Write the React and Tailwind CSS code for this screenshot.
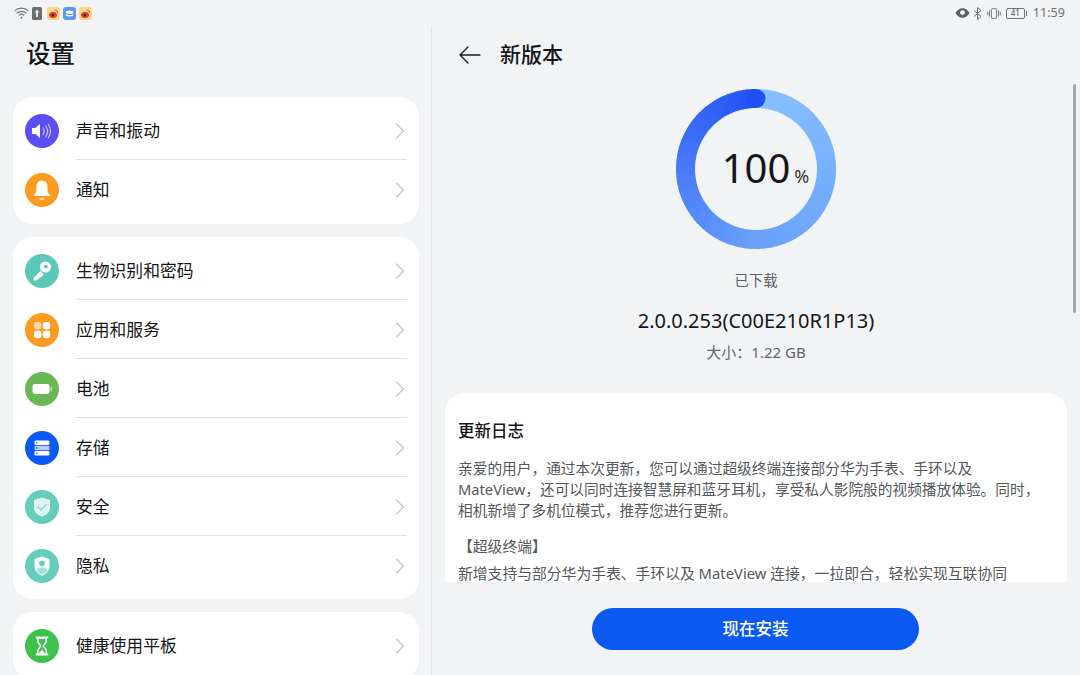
import { ChevronRight } from "lucide-react";

// small white glyphs that sit inside the round settings icons
const glyphs = {
  sound: (
    <>
      <path d="M7 14h3.4l4.6-4v14l-4.6-4H7z" fill="#fff" />
      <path d="M18 14c1.4 2 1.4 4.6 0 6.6M20.6 12c2.4 3.2 2.4 7.6 0 10.8M23.2 10.2c3 4 3 9.8 0 13.8" stroke="#fff" strokeOpacity="0.65" strokeWidth="1.2" fill="none" strokeLinecap="round" />
    </>
  ),
  bell: (
    <>
      <path d="M17 7.5c-3.6 0-5.6 2.8-5.6 6.2v4.2c0 1.3-1 2.6-2.4 3.9-.4.4-.2 1.2.5 1.2h15c.7 0 .9-.8.5-1.2-1.4-1.3-2.4-2.6-2.4-3.9v-4.2c0-3.4-2-6.2-5.6-6.2z" fill="#fff" />
      <path d="M14.4 25h5.2a2.6 2.1 0 0 1-5.2 0z" fill="#fff" fillOpacity="0.75" />
    </>
  ),
  key: (
    <>
      <path d="M15.5 17l-7 7v2.5h3l1-1.2h1.6v-1.6l1.6-.2 3-3" fill="#fff" />
      <circle cx="20.5" cy="13" r="5.6" fill="#fff" />
      <circle cx="20.8" cy="12.6" r="1.9" fill="#5cc9b8" />
    </>
  ),
  apps: (
    <>
      <rect x="9" y="9" width="7.4" height="7.4" rx="2.4" fill="#fff" fillOpacity="0.6" />
      <rect x="17.8" y="9" width="7.4" height="7.4" rx="2.4" fill="#fff" />
      <rect x="9" y="17.8" width="7.4" height="7.4" rx="2.4" fill="#fff" />
      <rect x="17.8" y="17.8" width="7.4" height="7.4" rx="2.4" fill="#fff" />
    </>
  ),
  battery: (
    <>
      <rect x="7.5" y="12" width="17" height="10" rx="2.4" fill="#fff" />
      <rect x="25.5" y="14.5" width="1.4" height="5" rx="0.7" fill="#fff" fillOpacity="0.6" />
    </>
  ),
  storage: (
    <>
      <rect x="9.5" y="9.5" width="15" height="4.4" rx="1.2" fill="#fff" />
      <rect x="9.5" y="14.8" width="15" height="4.4" rx="1.2" fill="#fff" fillOpacity="0.7" />
      <rect x="9.5" y="20.1" width="15" height="4.4" rx="1.2" fill="#fff" />
      <circle cx="11.8" cy="11.7" r="0.8" fill="#0a59f7" />
      <circle cx="11.8" cy="17" r="0.8" fill="#0a59f7" />
      <circle cx="11.8" cy="22.3" r="0.8" fill="#0a59f7" />
    </>
  ),
  shield: (
    <>
      <path d="M17 7.5l8 2.6v7.2c0 4.6-3.4 7.8-8 9.4-4.6-1.6-8-4.8-8-9.4v-7.2z" fill="#fff" fillOpacity="0.8" />
      <path d="M13 16.8l3 3 5-5" stroke="#8fdbe0" strokeWidth="1.8" fill="none" strokeLinecap="round" strokeLinejoin="round" />
    </>
  ),
  privacy: (
    <>
      <path d="M17 7.5l7.5 2.6v7.2c0 4.6-3.2 7.8-7.5 9.4-4.3-1.6-7.5-4.8-7.5-9.4v-7.2z" fill="#fff" fillOpacity="0.92" />
      <circle cx="17" cy="14.5" r="2.8" fill="#66cdbd" />
      <path d="M11.6 22c.8-2.6 3-3.8 5.4-3.8s4.6 1.2 5.4 3.8c-1.3 1.6-3.2 3-5.4 3.8-2.2-.8-4.1-2.2-5.4-3.8z" fill="#a8e3d9" />
    </>
  ),
  hourglass: (
    <>
      <path d="M11.5 8.5h11M11.5 25.5h11" stroke="#fff" strokeWidth="1.8" strokeLinecap="round" />
      <path d="M12.8 9v3.4c0 2 2.8 3.2 2.8 4.6s-2.8 2.6-2.8 4.6V25h8.4v-3.4c0-2-2.8-3.2-2.8-4.6s2.8-2.6 2.8-4.6V9z" stroke="#fff" strokeWidth="1.5" fill="none" />
      <path d="M14.4 24l2.6-3.6 2.6 3.6z" fill="#fff" />
    </>
  ),
};

const groups = [
  {
    rows: [
      { name: "声音和振动", color: "#5b4ef5", icon: "sound" },
      { name: "通知", color: "#fb9b1f", icon: "bell" },
    ],
  },
  {
    rows: [
      { name: "生物识别和密码", color: "#5cc9b8", icon: "key" },
      { name: "应用和服务", color: "#fb9b1f", icon: "apps" },
      { name: "电池", color: "#68b855", icon: "battery" },
      { name: "存储", color: "#0a59f7", icon: "storage" },
      { name: "安全", color: "#66cdbd", icon: "shield" },
      { name: "隐私", color: "#66cdbd", icon: "privacy" },
    ],
  },
  {
    rows: [{ name: "健康使用平板", color: "#3fc24c", icon: "hourglass" }],
  },
];

function SettingRow({ row, last }) {
  return (
    <div className="flex h-[59px] items-center pl-3 pr-3 relative">
      <svg width="34" height="34" viewBox="0 0 34 34" className="shrink-0">
        <circle cx="17" cy="17" r="17" fill={row.color} />
        {glyphs[row.icon]}
      </svg>
      <span className="ml-[17px] pt-[1px] flex-1 text-[16.8px] text-[#15161a]">{row.name}</span>
      <ChevronRight size={28} strokeWidth={1.2} className="text-[#c6c7d2] mr-[-7px] shrink-0" />
      {!last && <div className="absolute left-[63px] right-3 bottom-0 h-px bg-[#dfe0e2]" />}
    </div>
  );
}

// progress ring, drawn as short arcs so the colour can sweep round it
function Ring() {
  const stops = [
    [0, [136, 192, 255]],
    [0.5, [104, 160, 251]],
    [0.75, [72, 122, 247]],
    [1, [32, 80, 245]],
  ];
  const colorAt = (t) => {
    let i = 0;
    while (i < stops.length - 2 && t > stops[i + 1][0]) i++;
    const [a, ca] = stops[i];
    const [b, cb] = stops[i + 1];
    const k = (t - a) / (b - a);
    return `rgb(${ca.map((v, n) => Math.round(v + (cb[n] - v) * k)).join(",")})`;
  };
  const r = 70.5;
  const c = 80;
  const pt = (deg) => {
    const a = ((deg - 90) * Math.PI) / 180;
    return [c + r * Math.cos(a), c + r * Math.sin(a)];
  };
  const arcs = [];
  for (let d = 0; d < 360; d += 3) {
    const [x1, y1] = pt(d);
    const [x2, y2] = pt(d + 3.6);
    arcs.push(
      <path key={d} d={`M${x1} ${y1}A${r} ${r} 0 0 1 ${x2} ${y2}`} stroke={colorAt(d / 360)} strokeWidth="19" fill="none" />
    );
  }
  const [ex, ey] = pt(0);
  return (
    <svg width="160" height="160" viewBox="0 0 160 160">
      {arcs}
      <circle cx={ex} cy={ey} r="9.5" fill="#2050f5" />
    </svg>
  );
}

function WeiboIcon() {
  return (
    <svg width="13" height="13" viewBox="0 0 13 13">
      <rect width="13" height="13" rx="3" fill="#fcd58a" />
      <ellipse cx="6" cy="8" rx="4" ry="2.9" fill="#e0392b" />
      <circle cx="5.8" cy="8.1" r="1.3" fill="#2a2a2a" />
      <path d="M8.2 3.4c1.4 0 2.4 1 2.4 2.4" stroke="#e0392b" strokeWidth="1" fill="none" />
    </svg>
  );
}

function StatusLeft() {
  return (
    <div className="flex items-center gap-[3px] pl-[14px]">
      <svg width="15" height="14" viewBox="0 0 16 14" fill="none" stroke="#6f7276" strokeWidth="1.2" strokeLinecap="round">
        <path d="M1 4.5c3.8-3.6 10.2-3.6 14 0M3.2 7c2.6-2.4 7-2.4 9.6 0M5.5 9.3c1.4-1.2 3.6-1.2 5 0" />
        <circle cx="8" cy="12" r="1" fill="#6f7276" stroke="none" />
      </svg>
      <svg width="10" height="13" viewBox="0 0 10 13" className="mr-[2px]">
        <rect width="10" height="13" rx="1.5" fill="#6b6d70" />
        <path d="M5 2.5L7.5 5.5H6V10H4V5.5H2.5z" fill="#e6e6e6" />
      </svg>
      <WeiboIcon />
      <svg width="13" height="13" viewBox="0 0 13 13">
        <rect width="13" height="13" rx="3" fill="#5a97f7" />
        <ellipse cx="6.5" cy="5.2" rx="3.8" ry="1.8" fill="#fff" />
        <path d="M2.7 7.6c1.6 1.8 6 1.8 7.6 0" stroke="#fff" strokeWidth="1.2" fill="none" />
      </svg>
      <WeiboIcon />
    </div>
  );
}

function StatusRight() {
  return (
    <div className="flex items-center pr-[15px] text-[#6f7276]">
      <svg width="15" height="12" viewBox="0 0 15 12" className="mr-[3px]">
        <path d="M.5 6C2.2 2.8 4.7 1.2 7.5 1.2S12.8 2.8 14.5 6c-1.7 3.2-4.2 4.8-7 4.8S2.2 9.2.5 6z" fill="#5c5f63" />
        <circle cx="7.5" cy="5.6" r="2.4" fill="#f1f3f5" />
      </svg>
      <svg width="9" height="13" viewBox="0 0 9 13" fill="none" stroke="#6f7276" strokeWidth="1" className="mr-[5px]">
        <path d="M1 3.5l7 6-3.5 3V.5L8 3.5l-7 6" />
      </svg>
      <svg width="14" height="13" viewBox="0 0 16 13" fill="none" stroke="#6f7276" strokeWidth="1.1" className="mr-[5px]">
        <rect x="5" y="1" width="6" height="11" rx="1" />
        <path d="M2.8 3v7M.8 4.5v4M13.2 3v7M15.2 4.5v4" />
      </svg>
      <div className="flex items-center mr-[6px]">
        <div className="flex h-[11px] w-[19px] items-center justify-center rounded-[2px] border border-[#6f7276] text-[8px] leading-none font-medium">
          41
        </div>
        <div className="ml-px h-[5px] w-px bg-[#6f7276]" />
      </div>
      <span className="text-[12.6px] leading-none">11:59</span>
    </div>
  );
}

export default function App() {
  return (
    <div className="w-[1080px] h-[675px] overflow-hidden flex flex-col bg-[#f1f3f5] font-[family-name:'Noto_Sans','Noto_Sans_CJK_SC',sans-serif]">
      <div className="h-[26px] shrink-0 flex items-center justify-between">
        <StatusLeft />
        <StatusRight />
      </div>

      <div className="flex flex-1 min-h-0">
        {/* settings list */}
        <div className="w-[432px] shrink-0 border-r border-[#e1e3e7] pl-[13px] pr-[12px] overflow-hidden">
          <h1 className="h-[71px] pt-[9px] pl-[13px] text-[24.5px] leading-[38px] font-medium text-[#15161a]">设置</h1>
          <div className="flex flex-col gap-[13px]">
            {groups.map((group, i) => (
              <div key={i} className={`rounded-[20px] bg-white pt-[4px] ${i === 0 ? "pb-[5px]" : "pb-[4px]"}`}>
                {group.rows.map((row, j) => (
                  <SettingRow key={row.name} row={row} last={j === group.rows.length - 1} />
                ))}
              </div>
            ))}
          </div>
        </div>

        {/* update detail */}
        <div className="relative flex-1 flex flex-col min-w-0">
          <div className="h-[58px] shrink-0 flex items-center pl-[26px]">
            <svg width="24" height="20" viewBox="0 0 24 20" fill="none" stroke="#1c1c1e" strokeWidth="1.4" strokeLinecap="round" strokeLinejoin="round">
              <path d="M22 10H2M10 2l-8 8 8 8" />
            </svg>
            <span className="ml-[18px] text-[21px] font-medium text-[#15161a]">新版本</span>
          </div>

          <div className="h-[498px] shrink-0 overflow-hidden">
            <div className="flex flex-col items-center">
              <div className="relative mt-[5px] h-[160px] w-[160px]">
                <Ring />
                <div className="absolute inset-0 flex items-baseline justify-center pt-[55px] pl-[19px] text-[#15161a]">
                  <span className="text-[40px] leading-[48px]">100</span>
                  <span className="ml-[4px] text-[18px] leading-none text-[#333]">%</span>
                </div>
              </div>
              <div className="mt-[22px] text-[14.3px] leading-5 text-[#5c5f63]">已下载</div>
              <div className="mt-[18px] text-[20px] leading-6 text-[#15161a]">2.0.0.253(C00E210R1P13)</div>
              <div className="mt-[9px] text-[15px] leading-5 text-[#62656a]">大小：1.22 GB</div>
            </div>

            <div className="mx-[13px] mt-[31px] rounded-[20px] bg-white px-[13px] pt-[26px] pb-6">
              <h2 className="text-[16.5px] leading-6 font-medium text-[#15161a]">更新日志</h2>
              <p className="mt-[15px] text-[14.7px] leading-[21px] text-[#55585c] whitespace-nowrap">
                亲爱的用户，通过本次更新，您可以通过超级终端连接部分华为手表、手环以及
                <br />
                MateView，还可以同时连接智慧屏和蓝牙耳机，享受私人影院般的视频播放体验。同时，
                <br />
                相机新增了多机位模式，推荐您进行更新。
              </p>
              <p className="mt-[15px] text-[14.8px] leading-[21px] text-[#55585c]">【超级终端】</p>
              <p className="mt-[6px] text-[14.8px] leading-[21px] text-[#55585c]">
                新增支持与部分华为手表、手环以及 MateView 连接，一拉即合，轻松实现互联协同
              </p>
            </div>
          </div>

          <div className="flex justify-center pt-[26px] pr-[1px]">
            <button className="h-[42px] w-[327px] rounded-full bg-[#0a59f0] text-[16.5px] font-medium text-white">现在安装</button>
          </div>

          {/* overlay scrollbar */}
          <div className="absolute right-[4px] top-[58px] h-[229px] w-[3px] rounded-full bg-[#a4a6ae]" />
        </div>
      </div>
    </div>
  );
}
